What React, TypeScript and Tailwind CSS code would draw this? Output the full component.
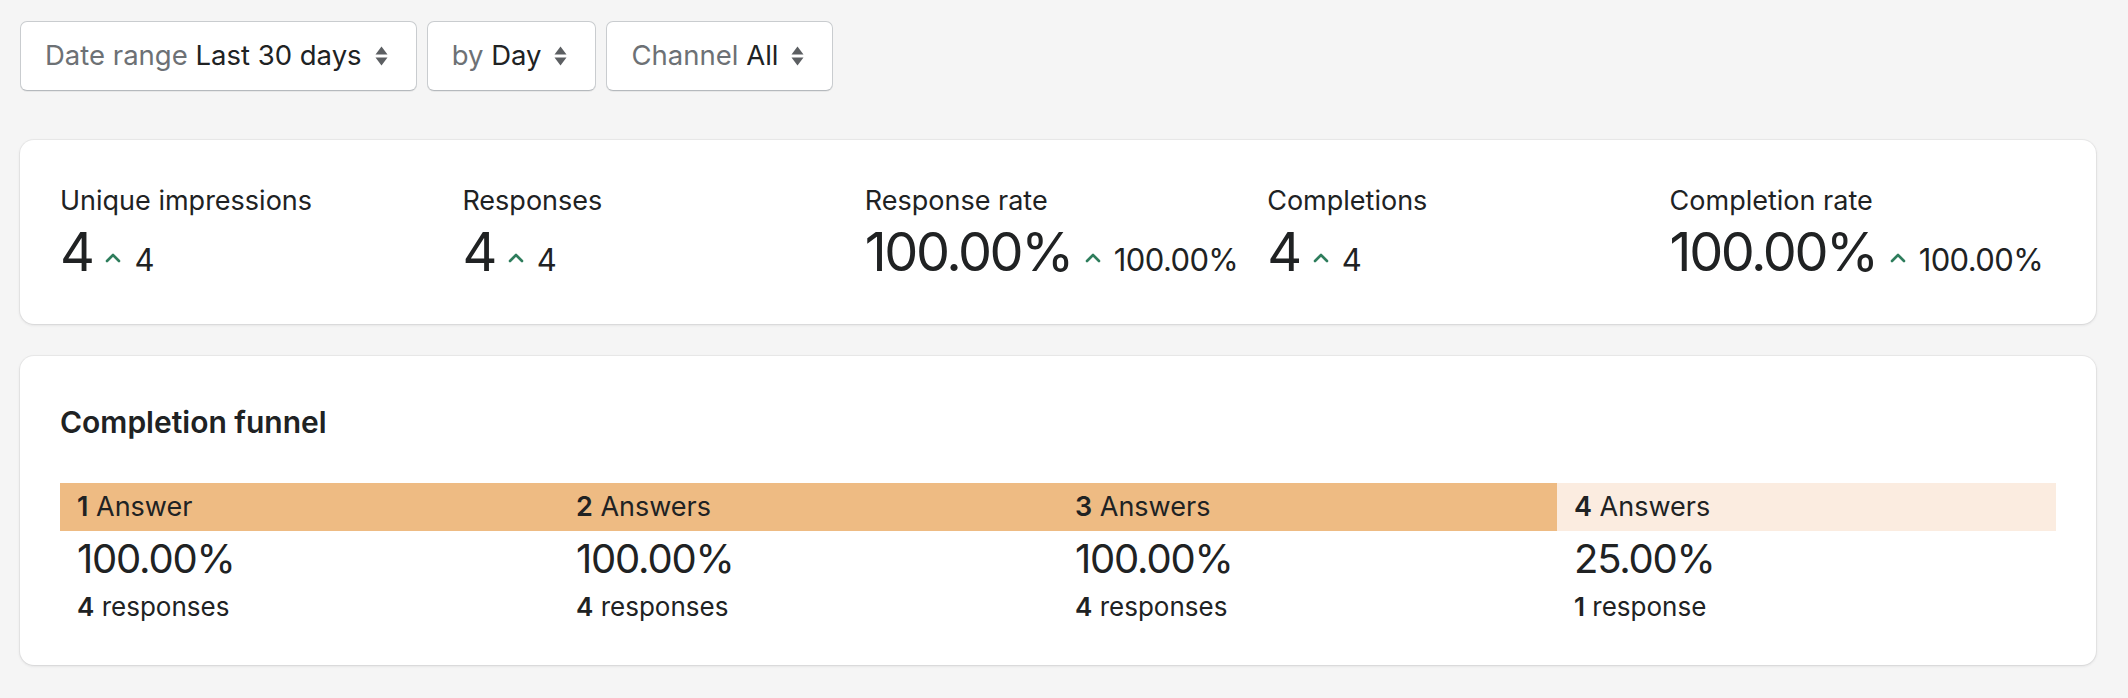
const filters = [
  { label: "Date range", value: "Last 30 days" },
  { label: "by", value: "Day" },
  { label: "Channel", value: "All" },
];

const stats = [
  { label: "Unique impressions", value: "4", delta: "4" },
  { label: "Responses", value: "4", delta: "4" },
  { label: "Response rate", value: "100.00%", delta: "100.00%" },
  { label: "Completions", value: "4", delta: "4" },
  { label: "Completion rate", value: "100.00%", delta: "100.00%" },
];

const funnel = [
  { step: "1", name: "Answer", pct: "100.00%", count: "4", unit: "responses", full: true },
  { step: "2", name: "Answers", pct: "100.00%", count: "4", unit: "responses", full: true },
  { step: "3", name: "Answers", pct: "100.00%", count: "4", unit: "responses", full: true },
  { step: "4", name: "Answers", pct: "25.00%", count: "1", unit: "response", full: false },
];

function SelectArrows() {
  return (
    <svg width="13" height="20" viewBox="0 0 13 20" className="shrink-0">
      <path d="M6.5 0.5 L12.5 8.5 H0.5 Z" fill="#5c5f62" />
      <path d="M6.5 19.5 L12.5 11.5 H0.5 Z" fill="#5c5f62" />
    </svg>
  );
}

function UpCaret() {
  return (
    <svg width="16" height="11" viewBox="0 0 16 11" className="shrink-0">
      <path d="M2 9 L8 3 L14 9" fill="none" stroke="#2e7d5c" strokeWidth="2.6" strokeLinecap="round" strokeLinejoin="round" />
    </svg>
  );
}

export default function App() {
  return (
    <div className="min-h-[698px] bg-[#f5f5f5] pl-[20px] pr-[32px] pt-[21px] pb-[29px] text-[#202223] font-['Inter',sans-serif]">
      <div className="flex gap-[10px]">
        {filters.map((f) => (
          <div
            key={f.label}
            className="flex h-[70px] items-center gap-[13px] rounded-[7px] border border-[#c9cccf] border-b-[#b5b9bd] bg-white pl-[24px] pr-[28px] text-[27.5px] shadow-[0_1px_0_rgba(0,0,0,0.05)]"
          >
            <span>
              <span className="text-[#6d7175]">{f.label}</span> {f.value}
            </span>
            <SelectArrows />
          </div>
        ))}
      </div>

      <div className="mt-[49px] rounded-[14px] bg-white px-[40px] pt-[43px] pb-[39px] shadow-[0_0_0_1px_rgba(63,63,68,0.05),0_1px_3px_rgba(63,63,68,0.15)]">
        <div className="grid grid-cols-5 gap-x-[16px]">
          {stats.map((s) => (
            <div key={s.label}>
              <p className="text-[27px] leading-[36px]">{s.label}</p>
              <div className="flex items-baseline">
                <span className="text-[54px] leading-[66px] tracking-[-0.045em]">{s.value}</span>
                <span className="mx-[13px] self-center pt-[10px]">
                  <UpCaret />
                </span>
                <span className="text-[31px] tracking-[-0.02em]">{s.delta}</span>
              </div>
            </div>
          ))}
        </div>
      </div>

      <div className="mt-[32px] rounded-[14px] bg-white px-[40px] pt-[46px] pb-[40px] shadow-[0_0_0_1px_rgba(63,63,68,0.05),0_1px_3px_rgba(63,63,68,0.15)]">
        <h2 className="text-[30px] font-semibold leading-[40px]">Completion funnel</h2>
        <div className="mt-[41px] grid grid-cols-4">
          {funnel.map((f) => (
            <div key={f.step}>
              <div
                className={
                  f.full
                    ? "flex h-[48px] items-center bg-[#eebb83] px-[17px] text-[27px]"
                    : "flex h-[48px] items-center bg-[#fbece0] px-[17px] text-[27px]"
                }
              >
                <span>
                  <span className="font-semibold">{f.step}</span> {f.name}
                </span>
              </div>
              <div className="px-[17px]">
                <p className="mt-[3px] text-[40px] leading-[50px] tracking-[-0.03em]">{f.pct}</p>
                <p className="mt-[5px] text-[26px] leading-[36px]">
                  <span className="font-semibold">{f.count}</span> {f.unit}
                </p>
              </div>
            </div>
          ))}
        </div>
      </div>
    </div>
  );
}
